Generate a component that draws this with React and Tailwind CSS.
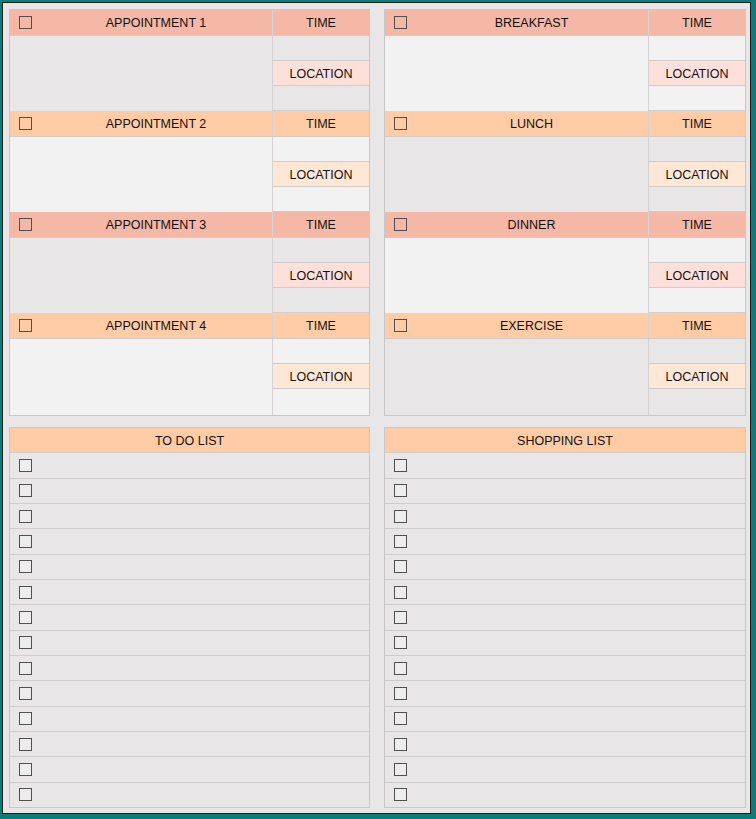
import React from "react";

function Box({ fill = "bg-transparent" }) {
  return <div className={`w-[13px] h-[13px] border border-[#505050] ${fill}`} />;
}

function Block({ title, tone, body, last }) {
  const hdr = tone === "salmon" ? "bg-[#f5b8a7]" : "bg-[#ffcca6]";
  const loc = tone === "salmon" ? "bg-[#fde0d9]" : "bg-[#ffe7d5]";
  const bodyBg = body === "gray" ? "bg-[#e8e6e6]" : "bg-[#f2f2f2]";
  return (
    <div className={`flex flex-col ${last ? "flex-1" : "shrink-0"}`}>
      <div className={`flex h-[26px] shrink-0 border-b border-[#cfcccc] ${hdr}`}>
        <div className="flex-1 flex items-center">
          <div className="w-[30px] pl-[9px] flex items-center">
            <Box />
          </div>
          <div className="flex-1 text-center pt-[2px]">{title}</div>
        </div>
        <div className="w-[97px] border-l border-[#d6d2d2] flex items-center justify-center pt-[2px]">TIME</div>
      </div>
      <div className={`flex flex-1 ${bodyBg}`}>
        <div className="flex-1" />
        <div className="w-[97px] border-l border-[#d6d2d2] flex flex-col">
          <div className="h-[25px] border-b border-[#cfcccc]" />
          <div className={`h-[25px] border-b border-[#cfcccc] flex items-center justify-center pt-[2px] ${loc}`}>LOCATION</div>
          <div className={last ? "flex-1" : "h-[25px] border-b border-[#cfcccc]"} />
        </div>
      </div>
    </div>
  );
}

function SchedulePanel({ blocks, width }) {
  return (
    <div className={`${width} h-[407px] border border-[#c9c6c6] overflow-hidden flex flex-col bg-[#e8e6e6]`}>
      {blocks.map((b, i) => (
        <Block key={b.title} {...b} last={i === blocks.length - 1} />
      ))}
    </div>
  );
}

function ListPanel({ title, width }) {
  const rows = Array.from({ length: 14 });
  return (
    <div className={`${width} h-[381px] border border-[#c9c6c6] flex flex-col bg-[#e8e6e6]`}>
      <div className="flex-1 bg-[#ffcca6] border-b border-[#cfcccc] flex items-center justify-center">
        <span className="translate-y-[1px]">{title}</span>
      </div>
      {rows.map((_, i) => (
        <div
          key={i}
          className={`flex-1 flex items-center pl-[9px] ${i < 13 ? "border-b border-[#cfcccc]" : ""}`}
        >
          <Box fill="bg-[#eeeded]" />
        </div>
      ))}
    </div>
  );
}

export default function App() {
  const left = [
    { title: "APPOINTMENT 1", tone: "salmon", body: "gray" },
    { title: "APPOINTMENT 2", tone: "peach", body: "light" },
    { title: "APPOINTMENT 3", tone: "salmon", body: "gray" },
    { title: "APPOINTMENT 4", tone: "peach", body: "light" },
  ];
  const right = [
    { title: "BREAKFAST", tone: "salmon", body: "light" },
    { title: "LUNCH", tone: "peach", body: "gray" },
    { title: "DINNER", tone: "salmon", body: "light" },
    { title: "EXERCISE", tone: "peach", body: "gray" },
  ];
  return (
    <div
      className="w-[756px] h-[819px] bg-[#0c7c79] pt-[2px] pl-[2px] pr-[5px] pb-[5px] text-[12.5px] text-[#111111]"
      style={{ fontFamily: '"Liberation Sans", Arial, sans-serif' }}
    >
      <div className="w-full h-full border border-[#1c1c1c] bg-[#e8e6e6] pt-[6px] pl-[6px] flex flex-col gap-[11px]">
        <div className="flex gap-[14px]">
          <SchedulePanel blocks={left} width="w-[361px]" />
          <SchedulePanel blocks={right} width="w-[362px]" />
        </div>
        <div className="flex gap-[14px]">
          <ListPanel title="TO DO LIST" width="w-[361px]" />
          <ListPanel title="SHOPPING LIST" width="w-[362px]" />
        </div>
      </div>
    </div>
  );
}
